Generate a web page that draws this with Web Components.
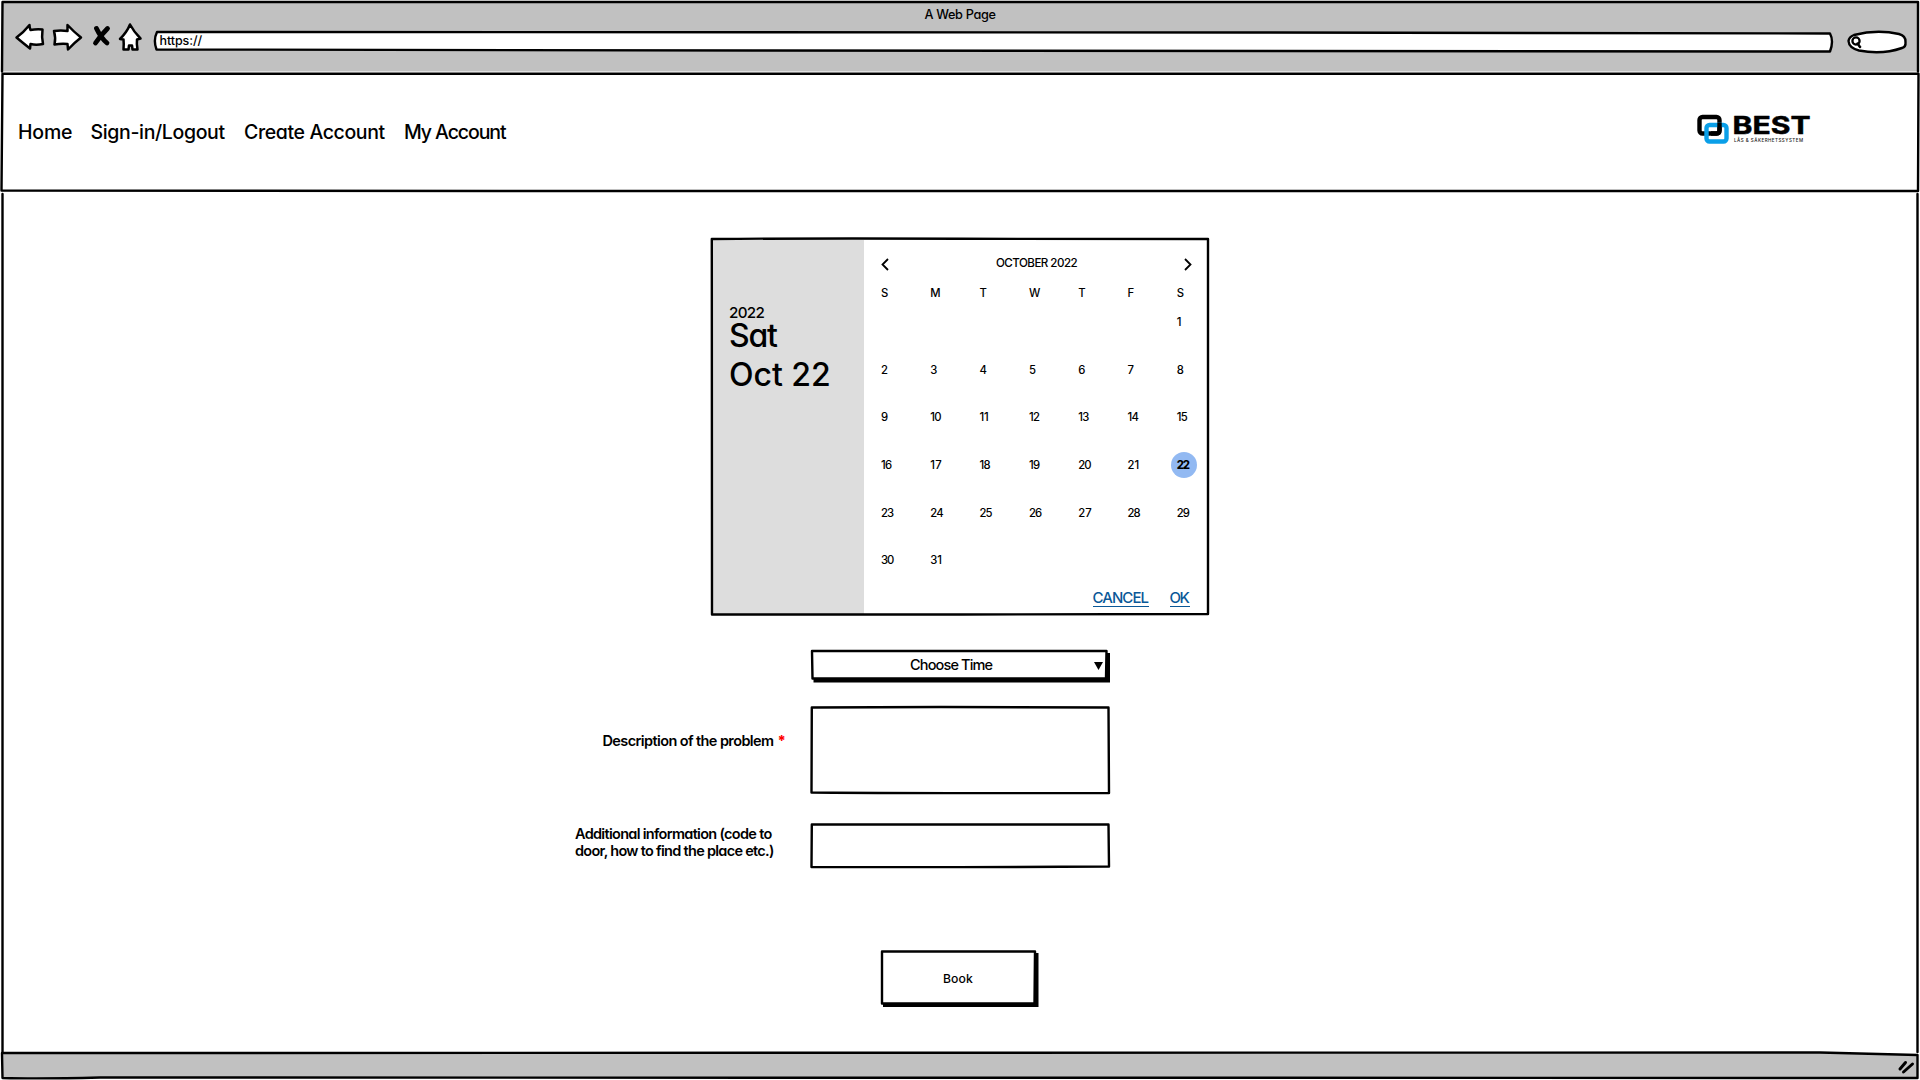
<!DOCTYPE html>
<html lang="en">
<head>
<meta charset="utf-8">
<title>A Web Page</title>
<style>
  html, body { margin: 0; padding: 0; background: #fff; }
  body { width: 1920px; height: 1080px; overflow: hidden; font-family: Inter, "Liberation Sans", sans-serif; color: #000; }
</style>
</head>
<body>
<sketch-window></sketch-window>

<script>
const define = (name, html, extra) => {
  const tpl = document.createElement('template');
  tpl.innerHTML = html;
  customElements.define(name, class extends HTMLElement {
    constructor() {
      super();
      this.attachShadow({ mode: 'open' }).append(tpl.content.cloneNode(true));
    }
    connectedCallback() { if (extra) extra.call(this, this.shadowRoot); }
  });
};

/* Text whose drawn width is set by "w"; the spacing between letters is fitted to it. */
const ctx = document.createElement('canvas').getContext('2d');
define('sketch-text', `
  <style>
    :host { display: block; flex: none; white-space: nowrap; line-height: 20px; height: 20px; font-weight: 500;
            font-feature-settings: "cv11"; }
    span { display: inline-block; }
  </style><span><slot></slot></span>`, function (root) {
  const size = +this.getAttribute('size') || 12, weight = this.getAttribute('weight') || 500;
  this.style.fontSize = size + 'px';
  this.style.fontWeight = weight;
  const text = this.textContent, w = +this.getAttribute('w'), span = root.querySelector('span');
  ctx.font = `${weight} ${size}px Inter, "Liberation Sans", sans-serif`;
  const m = ctx.measureText(text);
  const left = -m.actualBoundingBoxLeft, right = m.width - m.actualBoundingBoxRight;
  span.style.marginLeft = -left + 'px';
  if (w && text.length > 1) {
    const ink = span.getBoundingClientRect().width - left - right;
    span.style.letterSpacing = (w - ink) / (text.length - 1) + 'px';
    this.style.width = w + 'px';
  }
});

/* Hand-drawn outline behind slotted content. */
define('sketch-box', `
  <style>
    :host { display: grid; box-sizing: border-box; flex: none; }
    svg, .body { grid-area: 1 / 1; min-width: 0; min-height: 0; }
    svg { width: 100%; height: 100%; overflow: visible; display: block; }
    .body { display: flex; }
    svg.over { pointer-events: none; }
  </style>
  <svg><path class="shadow" fill="#000"/><path class="back"/></svg>
  <div class="body"><slot></slot></div>
  <svg class="over"><path class="line" fill="none" stroke-linejoin="round" stroke-linecap="round" stroke="#000"/></svg>`, function (root) {
  const line = root.querySelector('.line'), back = root.querySelector('.back');
  line.setAttribute('d', this.getAttribute('d'));
  line.setAttribute('stroke-width', this.getAttribute('weight') || 2.4);
  back.setAttribute('d', this.getAttribute('d'));
  back.setAttribute('fill', this.getAttribute('fill') || '#fff');
  root.querySelector('.shadow').setAttribute('d', this.getAttribute('shadow') || '');
});

define('sketch-icon', `
  <style>:host { display: block; flex: none; } svg { display: block; overflow: visible; }</style>
  <svg fill="#fff" stroke="#000" stroke-width="2.5" stroke-linejoin="round" stroke-linecap="round"></svg>`, function (root) {
  const icons = {
    back: [28, 28, '<path d="M1.500 14.500 Q9 9 14.500 2 Q14.500 5 15.500 7 Q21 6 27.500 6.500 Q26.500 14 28 21 Q21 22.500 15.500 21 L15 25.500 Q8 20 1.500 14.500Z"/>'],
    forward: [30, 28, '<path d="M2 8 Q9 7 15.500 8 L15.500 2 Q22 9 29 14.500 Q22 20 16 26.500 L15.500 21 Q9 20.500 2.500 21.500 Q4 15 2 8Z"/>'],
    stop: [18, 20, '<path fill="none" stroke-width="4.800" d="M3.500 2.500 Q8 12 14 17"/><path fill="none" stroke-width="4.800" d="M14.500 2.500 Q8 9 2.500 17"/>'],
    home: [24, 28, '<path d="M11 1.500 Q15 9 21.500 15.500 L18 16.500 Q17.500 21 18.500 26.500 L13.500 26.500 L13 22.500 L10 22.500 L9.500 26.500 L4.500 26.500 Q5 21 4.500 16.500 L1 16 Q8 9 11 1.500Z"/>'],
    search: [12, 14, '<circle cx="5" cy="5" r="3.600" fill="none" stroke-width="2.300"/><path d="M6.500 7.500 L9 11" fill="none" stroke-width="2.500"/>'],
    prev: [8, 13, '<path fill="none" stroke-width="1.800" stroke-linecap="butt" stroke-linejoin="miter" d="M7 1 L1.500 6.500 L7 12"/>'],
    next: [8, 13, '<path fill="none" stroke-width="1.800" stroke-linecap="butt" stroke-linejoin="miter" d="M1 1 L6.500 6.500 L1 12"/>'],
    caret: [9, 8, '<path fill="#000" stroke="none" d="M0 0 L9 0 L4.500 8Z"/>'],
    grip: [18, 16, '<path fill="none" stroke-width="3" d="M3 9 L8.500 2.500"/><path fill="none" stroke-width="3" d="M6.500 12 L15.500 4"/>']
  };
  const [w, h, art] = icons[this.getAttribute('name')], svg = root.querySelector('svg');
  svg.setAttribute('width', w); svg.setAttribute('height', h);
  svg.innerHTML = art;
});

define('browser-toolbar', `
  <style>
    :host { display: block; height: 73px; flex: none; }
    sketch-box.bar { width: 1920px; height: 73px; }
    .col { display: flex; flex-direction: column; width: 1920px; }
    .title { padding: 4.500px 0 0 924.500px; height: 18.500px; }
    .row { display: flex; align-items: flex-start; padding-left: 15px; }
    .url { width: 1682px; height: 22px; margin: 7px 0 0 10px; }
    .url sketch-text { margin: 1px 0 0 6.500px; }
    .search { width: 60px; height: 26px; margin: 5px 0 0 12px; }
    .search sketch-icon { margin: 8px 0 0 4px; }
  </style>
  <sketch-box class="bar" fill="#c1c1c1" d="M2 71.500 L2.500 2 L1918 2 L1918 71.500">
    <div class="col">
      <div class="title"><sketch-text size="12.700" w="71">A Web Page</sketch-text></div>
      <div class="row">
        <sketch-icon name="back"></sketch-icon>
        <sketch-icon name="forward" style="margin-left:9px"></sketch-icon>
        <sketch-icon name="stop" style="margin:3px 0 0 11px"></sketch-icon>
        <sketch-icon name="home" style="margin:0 0 0 8px"></sketch-icon>
        <sketch-box class="url" d="M4 2 Q600 1.500 1100 2.500 L1677 3.500 Q1681 11 1677 21.500 Q1000 20.500 600 20.500 L3.500 19.500 Q0 10 4 2Z">
          <sketch-text size="12.500" w="43">https://</sketch-text>
        </sketch-box>
        <sketch-box class="search" d="M7 7 Q30 1 52 6 Q59 8 58.500 14 Q59 19 55 20 Q35 27 12 22.500 Q2 20 1.500 13 Q2 9 7 7Z">
          <sketch-icon name="search"></sketch-icon>
        </sketch-box>
      </div>
    </div>
  </sketch-box>`);

define('best-logo', `
  <style>
    :host { display: flex; flex: none; width: 114px; height: 31px; gap: 5px; }
    svg { display: block; flex: none; overflow: visible; }
    text { font-family: Inter, sans-serif; font-weight: 700; }
    .sub { font-weight: 500; fill: #222; }
  </style>
  <svg width="32" height="31" fill="none" stroke-width="4.400">
    <rect x="2.500" y="2" width="20" height="16.500" rx="3" stroke="#000"/>
    <rect x="9.500" y="10" width="20" height="16.500" rx="3" stroke="#0a9fe8"/>
    <path d="M22.500 8 V15.500 Q22.500 18.500 19.500 18.500 H14" stroke="#000"/>
  </svg>
  <svg width="77" height="31">
    <text x="-1.500" y="19" font-size="24.500" textLength="78" lengthAdjust="spacingAndGlyphs" stroke="#000" stroke-width=".5" stroke-linejoin="round">BEST</text>
    <text class="sub" x="0" y="27" font-size="4.500" textLength="69" lengthAdjust="spacing">LÅS &amp; SÄKERHETSSYSTEM</text>
  </svg>`);

define('site-nav', `
  <style>
    :host { display: block; flex: none; height: 118px; }
    sketch-box { width: 1920px; height: 118px; }
    nav { display: flex; align-items: flex-start; padding: 49px 0 0 19px; width: 1901px; }
    sketch-text { margin-right: 19.500px; }
    best-logo { margin: -7px 109.500px 0 auto; }
  </style>
  <sketch-box d="M2.500 .8 L1918.500 .8 L1918 118 L500 118 L1.500 117.500 Z">
    <nav>
      <sketch-text size="19.500" w="53">Home</sketch-text>
      <sketch-text size="19.500" w="134">Sign-in/Logout</sketch-text>
      <sketch-text size="19.500" w="140.500">Create Account</sketch-text>
      <sketch-text size="19.500" w="102">My Account</sketch-text>
      <best-logo></best-logo>
    </nav>
  </sketch-box>`);

define('date-picker', `
  <style>
    :host { display: block; flex: none; width: 498px; height: 377px; }
    sketch-box { width: 498px; height: 377px; }
    .side { width: 151.500px; height: 374px; margin: 2px 0 0 1px; background: #ddd; flex: none; }
    .side sketch-text { margin-left: 18px; }
    .cal { display: flex; flex-direction: column; width: 344px; flex: none; }
    .head { display: flex; padding: 20px 16px 0 17.500px; justify-content: space-between; height: 24px; }
    .head sketch-text { margin: -5.500px 0 0 1px; }
    .grid { display: grid; grid-template-columns: repeat(7, 49.300px); grid-template-rows: 29.500px repeat(6, 47.700px);
            padding-left: 17.500px; margin-top: .5px; height: 304.500px; }
    .sel { display: grid; width: 26px; height: 26px; border-radius: 50%; background: #92b9f2; margin: -3px 0 0 -6px;
           align-items: center; }
    .sel sketch-text { margin-left: 6px; }
    .foot { display: flex; padding: 1px 0 0 229px; gap: 21px; color: #0a5797; }
    .foot div { height: 18.500px; border-bottom: 1.500px solid #0a5797; box-sizing: border-box; }
  </style>
  <sketch-box d="M.8 1 Q130 0 250 .8 L497 1 L497 376 L250 376.500 L1 376.500 Z">
    <div class="side">
      <sketch-text size="15.200" w="34.500" style="margin-top:63px">2022</sketch-text>
      <sketch-text size="32" w="48" style="line-height:40px;height:39px;margin-top:-7px">Sat</sketch-text>
      <sketch-text size="32" w="99" style="line-height:40px;height:39px">Oct 22</sketch-text>
    </div>
    <div class="cal">
      <div class="head">
        <sketch-icon name="prev"></sketch-icon>
        <sketch-text size="11.600" w="81.500">OCTOBER 2022</sketch-text>
        <sketch-icon name="next"></sketch-icon>
      </div>
      <div class="grid"></div>
      <div class="foot">
        <div><sketch-text size="15" w="56">CANCEL</sketch-text></div>
        <div><sketch-text size="15" w="20">OK</sketch-text></div>
      </div>
    </div>
  </sketch-box>`, function (root) {
  const grid = root.querySelector('.grid');
  let html = '';
  for (const d of 'SMTWTFS') html += `<div><sketch-text size="11.300">${d}</sketch-text></div>`;
  for (let i = 0; i < 6; i++) html += '<div></div>';
  for (let d = 1; d <= 31; d++) {
    const w = d < 10 ? '' : d === 11 ? 8.5 : d < 20 || d % 10 === 1 ? 11 : 13;
    const t = `<sketch-text size="11.300" ${w ? `w="${w}"` : ''} ${d === 22 ? 'weight="800"' : ''}>${d}</sketch-text>`;
    html += d === 22 ? `<div><div class="sel">${t}</div></div>` : `<div>${t}</div>`;
  }
  grid.innerHTML = html;
});

define('booking-form', `
  <style>
    :host { display: flex; flex-direction: column; flex: none; }
    .row { display: flex; align-items: flex-start; }
    .label { width: 236px; flex: none; }
    .label sketch-text { height: 17px; }
    .req { display: flex; padding-left: 28.500px; gap: 4.500px; box-sizing: border-box; }
    .req .star { color: #f00; }
  </style>
  <div class="row" style="padding-left:236px;height:56px">
    <sketch-box style="width:300px;height:33px" shadow="M2.500 3 H299 V32.500 H2.500Z" d="M1 1 L295.500 1 L295 28.500 L1.500 28.500Z">
      <sketch-text size="14.500" w="82.500" style="margin:5px 0 0 99px">Choose Time</sketch-text>
      <sketch-icon name="caret" style="margin:12px 0 0 101.500px"></sketch-icon>
    </sketch-box>
  </div>
  <div class="row" style="height:117px">
    <div class="label req" style="margin-top:25px">
      <sketch-text size="14.500" weight="600" w="170.500">Description of the problem</sketch-text>
      <sketch-text class="star" size="14.500" weight="800">*</sketch-text>
    </div>
    <sketch-box style="width:299px;height:88px" d="M.8 1.500 L130 1 L297.500 1.500 L298 87 Q130 87.500 .5 86.500Z"></sketch-box>
  </div>
  <div class="row" style="height:127px">
    <div class="label" style="padding-top:1px">
      <sketch-text size="14.500" weight="600" w="197.500">Additional information (code to</sketch-text>
      <sketch-text size="14.500" weight="600" w="199">door, how to find the place etc.)</sketch-text>
    </div>
    <sketch-box style="width:299px;height:45px" d="M.8 1.500 L297.500 1.500 L298 43.500 Q130 44.500 .5 44Z"></sketch-box>
  </div>
  <div class="row" style="padding-left:306px">
    <sketch-box style="width:157px;height:57px" shadow="M2 3 H157.500 V57 H2Z" d="M1 1.500 L154 1.500 L153.500 53.500 L1 53.500Z">
      <sketch-text size="12.200" w="30" style="margin:19px 0 0 62px">Book</sketch-text>
    </sketch-box>
  </div>`);

define('browser-status', `
  <style>
    :host { display: block; flex: none; }
    sketch-box { width: 1920px; height: 28px; }
    sketch-icon { margin: 8px 0 0 1897px; }
  </style>
  <sketch-box fill="#c1c1c1" d="M2 1 L1820 .5 L1917.500 3 L1917.500 26 L100 25.500 Q40 27 2.500 26Z">
    <sketch-icon name="grip"></sketch-icon>
  </sketch-box>`);

define('sketch-window', `
  <style>
    :host { display: flex; flex-direction: column; width: 1920px; height: 1080px; background: #fff; }
    .page { width: 1920px; height: 861px; }
    .col { display: flex; flex-direction: column; width: 1920px; }
    date-picker { margin: 47px 0 0 711px; }
    booking-form { margin: 35px 0 0 575px; }
  </style>
  <browser-toolbar></browser-toolbar>
  <site-nav></site-nav>
  <sketch-box class="page" fill="none" d="M2.500 3 V861 M1917.500 3 V861">
    <div class="col">
      <date-picker></date-picker>
      <booking-form></booking-form>
    </div>
  </sketch-box>
  <browser-status></browser-status>`);
</script>
</body>
</html>
